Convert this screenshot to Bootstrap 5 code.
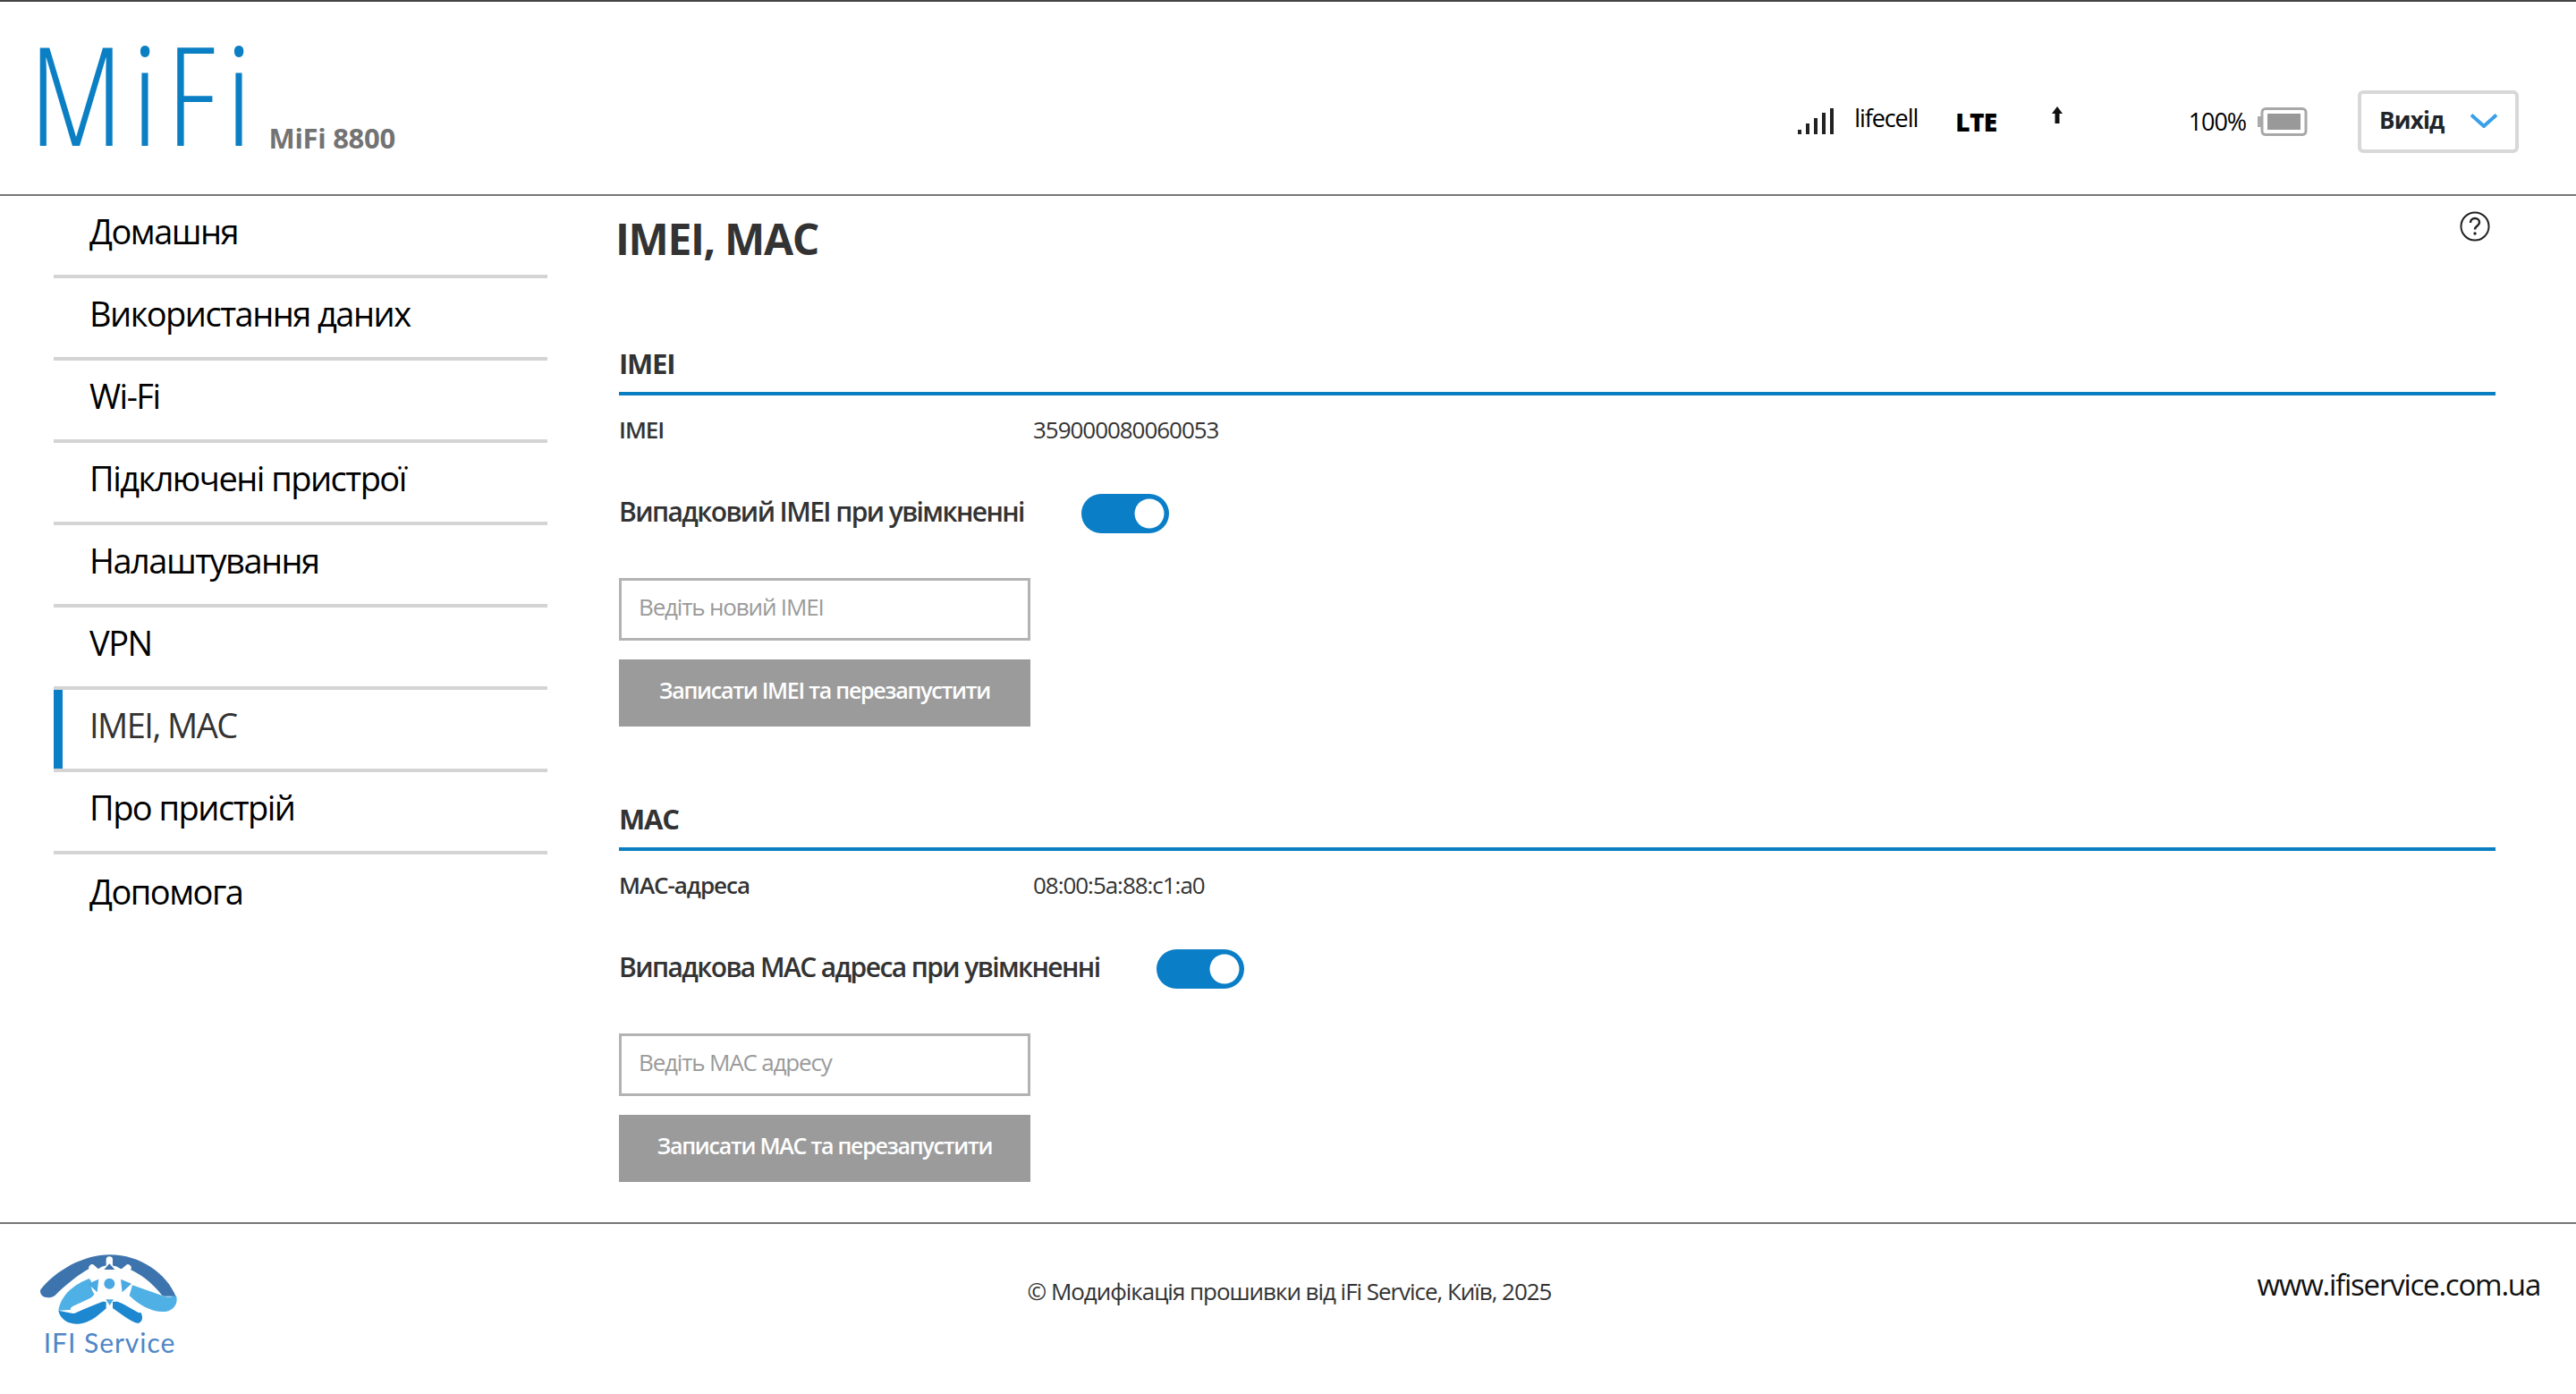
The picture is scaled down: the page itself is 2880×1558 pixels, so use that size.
<!DOCTYPE html>
<html lang="uk"><head><meta charset="utf-8"><title>MiFi 8800</title>
<link href="https://cdn.jsdelivr.net/npm/bootstrap@5.3.0/dist/css/bootstrap.min.css" rel="stylesheet">
<style>
html,body{height:100%;}
body{font-family:"Open Sans","Noto Sans",sans-serif;color:#000;background:#fff;overflow:hidden;}
.hdr{height:219px;border-top:2px solid #444;border-bottom:2px solid #777;}
.brand{margin-left:33px;margin-top:36px;height:130px;}
.brand-mark{font-stretch:75%;font-weight:300;font-size:154px;line-height:130px;color:#0b7fc4;letter-spacing:.065em;}
.brand-model{font-weight:700;font-size:31px;color:#737373;margin-left:9px;line-height:1;margin-bottom:-2px;letter-spacing:-.01em;}
.stat{font-size:27px;line-height:34px;letter-spacing:-.04em;}
.stat-lte{font-weight:800;font-size:28px;letter-spacing:-.02em;}
.logout{width:180px;height:70px;border:4px solid #d8d8d8;border-radius:6px;background:#fff;font-weight:700;font-size:26px;letter-spacing:-.03em;padding:0 20px 2px;}
.side{width:552px;margin-left:60px;flex:none;}
.side .list-group-item{height:92px;padding:0 0 10px 40px;border:0;border-bottom:4px solid #d4d4d4;border-radius:0;font-size:38px;letter-spacing:-.04em;display:flex;align-items:center;color:#000;background:#fff;}
.side .list-group-item.act{color:#333;box-shadow:inset 10px 0 0 #0a7ec7;}
.cnt{margin-left:80px;width:2098px;}
.ttl{font-size:48px;line-height:58px;font-weight:700;letter-spacing:-.028em;color:#333;margin:19px 0 0 -4px;}
.sect{font-size:31px;line-height:36px;font-weight:700;letter-spacing:-.04em;color:#333;margin:0;padding-bottom:14px;border-bottom:4px solid #0a7ec0;}
.rowl{margin-top:23px;font-size:26px;line-height:30px;letter-spacing:-.04em;color:#333;}
.rowl .lab{width:463px;font-weight:600;}
.tog{margin-top:57px;height:44px;gap:64px;font-size:30px;font-weight:600;letter-spacing:-.053em;color:#333;}
.tog>span{margin-top:-5px;}
.tog .form-check{padding:0;margin:0;min-height:0;}
.tog .form-check-input{width:98px;height:44px;margin:0;float:none;background-color:#0a7ec7;border:0;display:block;}
.inp{margin-top:50px;width:460px;height:70px;border:3px solid #b3b3b3;border-radius:0;font-size:26px;letter-spacing:-.045em;padding:0 19px 7px;}
.inp::placeholder{color:#9a9a9a;}
.act-btn{margin-top:21px;display:block;width:460px;height:75px;border:0;border-radius:0;background:#9b9b9b;color:#fff;font-size:25px;letter-spacing:-.05em;font-weight:600;padding:0 0 5px;}
.ftr{border-top:2px solid #777;height:192px;}
.ftr-left{flex:1 1 0;padding:30px 0 0 43px;}
.ftr-logo-name{font-family:"Lato",sans-serif;font-size:90px;fill:#4f86c6;}
.ftr-c{font-size:26px;letter-spacing:-.04em;color:#333;padding-top:56px;}
.ftr-r{flex:1 1 0;font-size:33px;letter-spacing:-.037em;padding:43px 40px 0 0;color:#111;}
.q{position:absolute;right:96px;top:17px;}
</style></head>
<body>
<header class="hdr d-flex justify-content-between">
  <div class="brand d-flex align-items-end">
    <span class="brand-mark">MiFi</span><span class="brand-model">MiFi 8800</span>
  </div>
  <div class="d-flex align-items-center" style="margin-right:64px;margin-top:52px">
    <svg width="40" height="30" viewBox="0 0 40 30" aria-hidden="true" style="margin-right:23px"><g fill="#222"><rect x="0" y="24" width="4" height="5"/><rect x="9" y="17" width="4" height="12"/><rect x="18" y="11" width="4" height="18"/><rect x="27" y="5" width="4" height="24"/><rect x="36" y="0" width="4" height="29"/></g></svg>
    <span class="stat" style="margin-top:-8px">lifecell</span>
    <span class="stat stat-lte" style="margin-left:42px">LTE</span>
    <svg width="14" height="20" viewBox="0 0 14 20" style="margin-left:60px;margin-top:-14px" aria-hidden="true"><path d="M7 0L13 8H9.500V19H4.500V8H1Z" fill="#111"/></svg>
    <span class="stat" style="margin-left:140px">100%</span>
    <svg width="56" height="32" viewBox="0 0 56 32" style="margin-left:13px" aria-hidden="true"><rect x="0" y="10" width="4" height="12" fill="#aaa"/><rect x="5" y="1.500" width="49" height="29" rx="4" fill="#fff" stroke="#a8a8a8" stroke-width="3"/><rect x="11" y="7" width="37" height="18" fill="#999"/></svg>
    <button class="logout btn d-flex align-items-center justify-content-between" style="margin-left:56px"><span>Вихід</span>
      <svg width="30" height="16" viewBox="0 0 30 16" aria-hidden="true"><path d="M1 1.500L15 14L29 1.500" fill="none" stroke="#3aa0e8" stroke-width="4"/></svg></button>
  </div>
</header>
<main class="d-flex position-relative" style="height:1147px">
  <nav class="side"><div class="list-group list-group-flush">
    <a class="list-group-item" href="#">Домашня</a>
    <a class="list-group-item" href="#">Використання даних</a>
    <a class="list-group-item" href="#">Wi-Fi</a>
    <a class="list-group-item" href="#">Підключені пристрої</a>
    <a class="list-group-item" href="#">Налаштування</a>
    <a class="list-group-item" href="#">VPN</a>
    <a class="list-group-item act" href="#">IMEI, MAC</a>
    <a class="list-group-item" href="#">Про пристрій</a>
    <a class="list-group-item" href="#">Допомога</a>
  </div></nav>
  <section class="cnt">
    <h1 class="ttl">IMEI, MAC</h1>
    <svg class="q" width="34" height="34" viewBox="0 0 34 34" aria-hidden="true"><circle cx="17" cy="17" r="15.500" fill="none" stroke="#222" stroke-width="2"/><path d="M12 13c0-3 2-5 5-5s5 2 5 4.500c0 4-5 4-5 8" fill="none" stroke="#222" stroke-width="2.400"/><circle cx="17" cy="25" r="1.700" fill="#222"/></svg>
    <h2 class="sect" style="margin-top:92px">IMEI</h2>
    <div class="rowl d-flex"><span class="lab">IMEI</span><span>359000080060053</span></div>
    <div class="tog d-flex align-items-center"><span>Випадковий IMEI при увімкненні</span><div class="form-check form-switch"><input class="form-check-input" type="checkbox" checked aria-label="IMEI"></div></div>
    <input class="form-control inp" type="text" placeholder="Ведіть новий IMEI">
    <button class="btn act-btn" type="button">Записати IMEI та перезапустити</button>
    <h2 class="sect" style="margin-top:85px">MAC</h2>
    <div class="rowl d-flex"><span class="lab">MAC-адреса</span><span>08:00:5a:88:c1:a0</span></div>
    <div class="tog d-flex align-items-center"><span>Випадкова MAC адреса при увімкненні</span><div class="form-check form-switch"><input class="form-check-input" type="checkbox" checked aria-label="MAC"></div></div>
    <input class="form-control inp" type="text" placeholder="Ведіть MAC адресу">
    <button class="btn act-btn" type="button">Записати MAC та перезапустити</button>
  </section>
</main>
<footer class="ftr d-flex">
  <div class="ftr-left">
    <svg width="160" height="124" viewBox="130 175 480 372" aria-hidden="true">
      <path d="M137 305C190 240 280 188 370 188C470 188 560 250 592 330C575 325 555 330 545 325C510 280 470 250 430 235H300C270 250 220 290 185 325C165 340 130 330 137 305Z" fill="#3e74ad"/>
      <path d="M445 290L545 325C560 332 580 330 592 325C600 350 585 372 560 378C520 385 470 360 435 325Z" fill="#4fb0e6"/>
      <path d="M197 375C205 320 255 285 300 268L345 320L245 372Z" fill="#4fb0e6"/>
      <path d="M197 375C205 418 260 432 300 410C330 395 345 375 369 360C400 380 440 415 465 418C485 410 480 385 465 372L395 345H345L245 385Z" fill="#1d87d0"/>
      <path d="M250 372L345 328M395 328L468 370" stroke="#fff" stroke-width="24" stroke-linecap="round" fill="none"/>
      <circle cx="368" cy="285" r="62" fill="#fff"/>
      <g stroke="#fff" stroke-width="22" stroke-linecap="round" fill="none"><path d="M368 285V205M368 285L310 232M368 285L430 232M368 285V372M368 285L425 345M368 285L310 345"/></g>
      <path d="M350 238L368 218L386 238Z" fill="#3e74ad"/>
      <circle cx="368" cy="285" r="18" fill="#4aa8e2"/>
      <path d="M296 285L332 270L327 314ZM442 285L406 270L411 314ZM356 338H382L369 358Z" fill="#4aa8e2"/>
      <text class="ftr-logo-name" x="147" y="518" textLength="440">IFI Service</text>
    </svg>
  </div>
  <div class="ftr-c">© Модифікація прошивки від iFi Service, Київ, 2025</div>
  <div class="ftr-r text-end">www.ifiservice.com.ua</div>
</footer>
<script src="https://cdn.jsdelivr.net/npm/bootstrap@5.3.0/dist/js/bootstrap.bundle.min.js"></script>
</body></html>
